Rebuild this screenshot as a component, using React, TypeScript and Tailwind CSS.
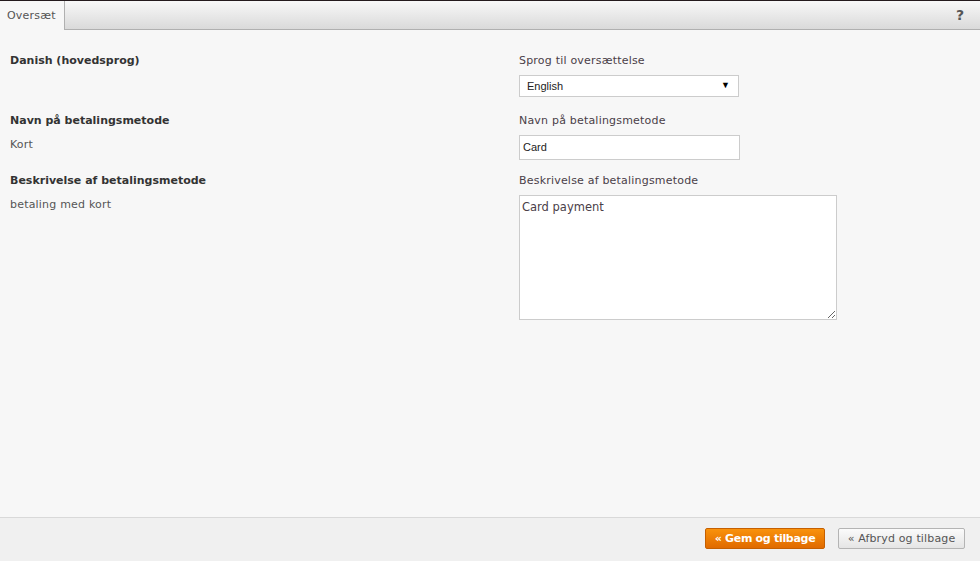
import React from "react";

export default function App() {
  const v = { fontFamily: '"DejaVu Sans", Verdana, sans-serif' };
  const a = { fontFamily: '"Liberation Sans", Arial, sans-serif' };
  return (
    <div className="w-[980px] h-[561px] flex flex-col bg-[#f7f7f7] overflow-hidden" style={v}>
      <div className="h-px bg-[#241a1d]" />
      <div className="flex h-[29px]">
        <div className="w-[64px] flex items-center pl-[7px] text-[11px] text-[#555] pt-[1px] tracking-[0.2px]">Oversæt</div>
        <div className="flex-1 flex items-center justify-end pr-[16px] border-l border-b border-[#b0b0b0] bg-gradient-to-b from-[#f8f8f8] to-[#dadada]">
          <span className="text-[14px] font-bold text-[#555]">?</span>
        </div>
      </div>
      <div className="flex-1 pt-[22px] pl-[10px]">
        <div className="grid grid-cols-[509px_1fr]">
          <div className="h-[60px]">
            <div className="h-4 leading-[18px] text-[11px] font-bold text-[#333]">Danish (hovedsprog)</div>
          </div>
          <div className="h-[60px]">
            <div className="h-4 leading-[18px] text-[11px] text-[#4a4048] tracking-[0.2px]">Sprog til oversættelse</div>
            <div className="mt-[7px] w-[220px] h-[22px] bg-white border border-[#cccccc] flex items-center justify-between pl-[7px] pr-[8px]" style={a}>
              <span className="text-[11px] text-[#222]">English</span>
              <span className="text-[9px] text-black">▼</span>
            </div>
          </div>
          <div className="h-[60px]">
            <div className="h-4 leading-[18px] text-[11px] font-bold text-[#333]">Navn på betalingsmetode</div>
            <div className="mt-[8px] h-4 leading-[18px] text-[11px] text-[#555] tracking-[0.2px]">Kort</div>
          </div>
          <div className="h-[60px]">
            <div className="h-4 leading-[18px] text-[11px] text-[#4a4048] tracking-[0.2px]">Navn på betalingsmetode</div>
            <div className="mt-[7px] w-[221px] h-[25px] bg-white border border-[#cccccc] flex items-center pl-[3px]" style={a}>
              <span className="text-[11px] text-[#222]">Card</span>
            </div>
          </div>
          <div>
            <div className="h-4 leading-[18px] text-[11px] font-bold text-[#333]">Beskrivelse af betalingsmetode</div>
            <div className="mt-[8px] h-4 leading-[18px] text-[11px] text-[#555] tracking-[0.2px]">betaling med kort</div>
          </div>
          <div>
            <div className="h-4 leading-[18px] text-[11px] text-[#4a4048] tracking-[0.2px]">Beskrivelse af betalingsmetode</div>
            <textarea
              className="mt-[7px] block w-[318px] h-[125px] bg-white border border-[#cccccc] px-[2px] py-[3px] text-[11.5px] leading-[16px] text-[#4a4048] outline-none"
              style={v}
              defaultValue="Card payment"
            />
          </div>
        </div>
      </div>
      <div className="h-[44px] border-t border-[#d9d9d9] bg-[#f0f0f0] flex items-start justify-end gap-[13px] pt-[10px] pr-[15px]">
        <button className="h-[21px] w-[120px] rounded-[2px] border border-[#c55f00] bg-gradient-to-b from-[#f9920c] to-[#e06a00] text-white text-[11px] font-bold tracking-[-0.3px] pt-[1px] flex items-center justify-center" style={v}>
          « Gem og tilbage
        </button>
        <button className="h-[21px] w-[127px] rounded-[2px] border border-[#b4b4b4] bg-gradient-to-b from-[#fbfbfb] to-[#e5e5e5] text-[#555] text-[11px] tracking-[0.15px] pt-[1px] flex items-center justify-center" style={v}>
          « Afbryd og tilbage
        </button>
      </div>
    </div>
  );
}
